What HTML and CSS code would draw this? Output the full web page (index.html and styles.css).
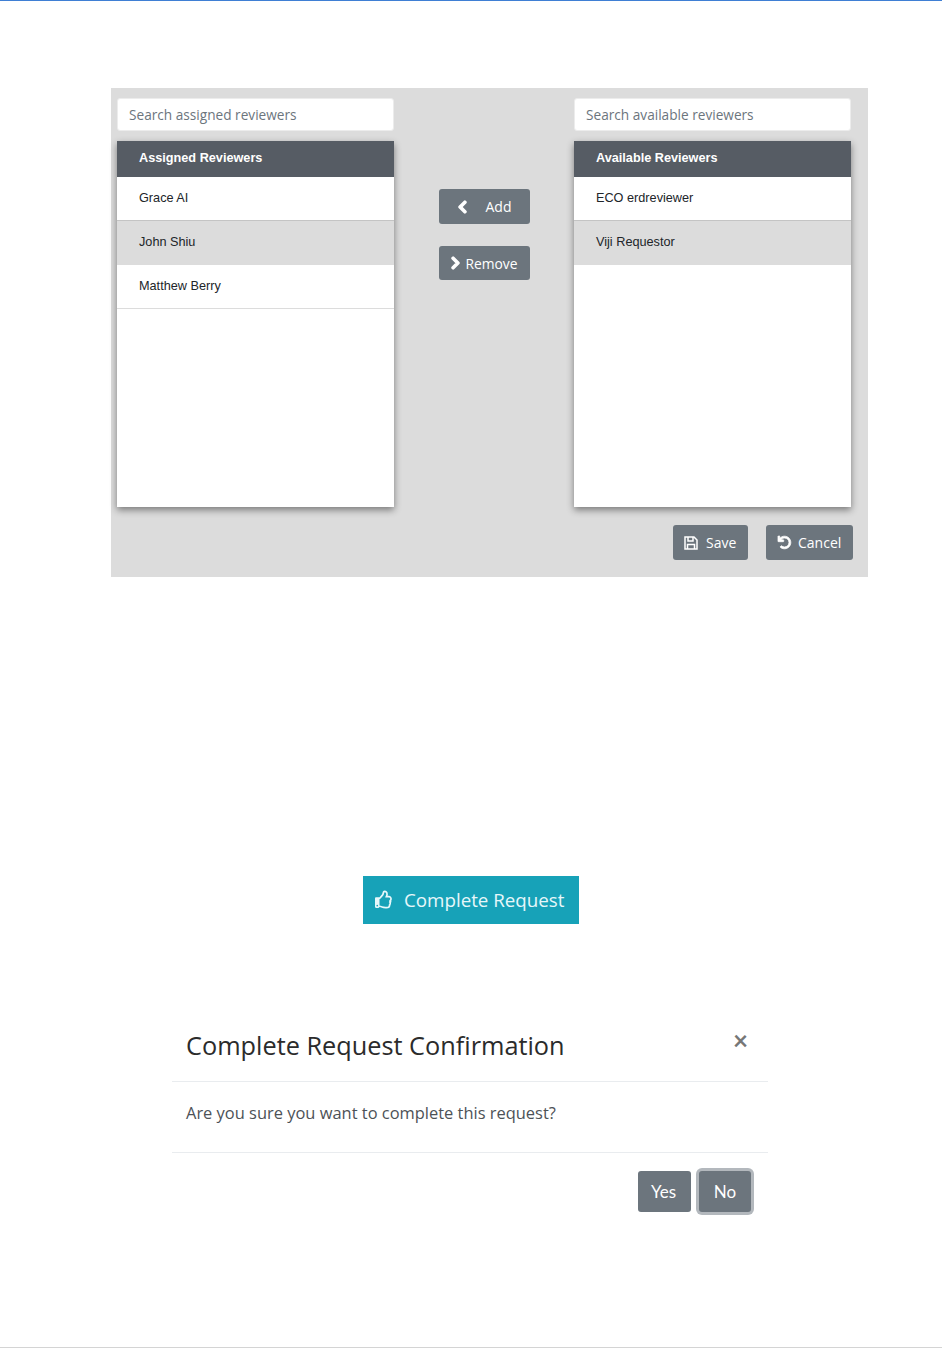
FILE: index.html
```html
<!DOCTYPE html>
<html lang="en">
<head>
    <meta charset="UTF-8">
    <meta name="viewport" content="width=device-width, initial-scale=1.0">
    <title>Reviewers</title>
    <link rel="stylesheet" href="styles.css">
</head>
<body>
    <section class="panel">
        <div class="columns">
            <div class="column">
                <input class="search" type="text" placeholder="Search assigned reviewers">
                <div class="list">
                    <div class="list-head">Assigned Reviewers</div>
                    <div class="list-row before-selected">Grace AI</div>
                    <div class="list-row selected">John Shiu</div>
                    <div class="list-row">Matthew Berry</div>
                </div>
            </div>

            <div class="transfer">
                <button class="btn btn-add">
                    <svg class="icon" viewBox="0 0 320 512"><path d="M34.52 239.03L228.87 44.69c9.37-9.37 24.57-9.37 33.94 0l22.67 22.67c9.36 9.36 9.37 24.52.04 33.9L131.49 256l154.02 154.75c9.34 9.38 9.32 24.54-.04 33.9l-22.67 22.67c-9.37 9.37-24.57 9.37-33.94 0L34.52 272.97c-9.37-9.37-9.37-24.57 0-33.94z"/></svg>
                    Add
                </button>
                <button class="btn btn-remove">
                    <svg class="icon" viewBox="0 0 320 512"><path d="M285.476 272.971L91.132 467.314c-9.373 9.373-24.569 9.373-33.941 0l-22.667-22.667c-9.357-9.357-9.375-24.522-.04-33.901L188.505 256 34.484 101.255c-9.335-9.379-9.317-24.544.04-33.901l22.667-22.667c9.373-9.373 24.569-9.373 33.941 0L285.475 239.03c9.373 9.372 9.373 24.568.001 33.941z"/></svg>
                    Remove
                </button>
            </div>

            <div class="column">
                <input class="search" type="text" placeholder="Search available reviewers">
                <div class="list">
                    <div class="list-head">Available Reviewers</div>
                    <div class="list-row before-selected">ECO erdreviewer</div>
                    <div class="list-row selected">Viji Requestor</div>
                </div>
            </div>
        </div>

        <div class="panel-actions">
            <button class="btn btn-save">
                <svg class="icon-save" viewBox="0 0 14 14"><path d="M1 1H10L13 4V13H1Z"/><path d="M4 1V5H9V1"/><path d="M3.5 13V8.5H10.5V13"/></svg>
                Save
            </button>
            <button class="btn btn-cancel">
                <svg class="icon" viewBox="0 0 512 512"><path d="M212.333 224.333H12c-6.627 0-12-5.373-12-12V12C0 5.373 5.373 0 12 0h48c6.627 0 12 5.373 12 12v78.112C117.773 39.279 184.26 7.47 258.175 8.007c136.906.994 246.448 111.623 246.157 248.532C504.041 393.258 393.12 504 256.333 504c-64.089 0-122.496-24.313-166.51-64.215-5.099-4.622-5.334-12.554-.467-17.42l33.967-33.967c4.474-4.474 11.662-4.717 16.401-.525C170.76 415.336 211.58 432 256.333 432c97.268 0 176-78.716 176-176 0-97.267-78.716-176-176-176-58.496 0-110.28 28.476-142.274 72.333h98.274c6.627 0 12 5.373 12 12v48c0 6.627-5.373 12-12 12z"/></svg>
                Cancel
            </button>
        </div>
    </section>

    <div class="complete-wrap">
        <button class="btn-complete">
            <svg class="thumb" viewBox="0 0 512 512"><path d="M466.27 286.69C475.04 271.84 480 256 480 236.85c0-44.015-37.218-85.58-85.82-85.58H357.7c4.92-12.81 8.85-28.13 8.85-46.54C366.55 31.936 328.86 0 271.28 0c-61.607 0-58.093 94.933-71.76 108.6-22.747 22.747-49.615 66.447-68.76 83.4H32c-17.673 0-32 14.327-32 32v240c0 17.673 14.327 32 32 32h64c14.893 0 27.408-10.174 30.978-23.95 44.509 1.001 75.06 39.94 177.802 39.94 7.22 0 15.22.01 22.22.01 77.117 0 111.986-39.423 112.94-95.33 13.319-18.425 20.299-43.122 17.34-66.99 9.854-18.452 13.664-40.343 8.99-62.99zm-61.75 53.83c12.56 21.13 1.26 49.41-13.94 57.57 7.7 48.78-17.608 65.9-53.12 65.9h-37.82c-71.639 0-118.029-37.82-171.64-37.82V240h10.92c28.36 0 67.98-70.89 94.54-97.46 28.36-28.36 18.91-75.63 37.82-94.54 47.27 0 47.27 32.98 47.27 56.73 0 39.17-28.36 56.72-28.36 94.54h103.99c21.11 0 37.73 18.91 37.82 37.82.09 18.9-12.82 37.81-28.32 37.82 8.8 21.1.8 42.6-10.14 56.4zM88 432c0 13.255-10.745 24-24 24s-24-10.745-24-24 10.745-24 24-24 24 10.745 24 24z"/></svg>
            Complete Request
        </button>
    </div>

    <section class="modal">
        <div class="modal-head">
            <h2 class="modal-title">Complete Request Confirmation</h2>
            <span class="modal-close">&times;</span>
        </div>
        <div class="modal-body">Are you sure you want to complete this request?</div>
        <div class="modal-foot">
            <button class="btn-modal">Yes</button>
            <button class="btn-modal focused">No</button>
        </div>
    </section>

    <div class="page-rule"></div>
</body>
</html>
```

FILE: styles.css
```css
* {
    box-sizing: border-box;
}

body {
    margin: 0;
    height: 1348px;
    display: flex;
    flex-direction: column;
    background: #fff;
    border-top: 1px solid #3f7fd4;
    font-family: "Open Sans", sans-serif;
    overflow: hidden;
}

button {
    font-family: inherit;
    border: none;
    cursor: pointer;
}

.panel {
    width: 757px;
    height: 489px;
    margin: 87px 0 0 111px;
    padding: 10px 17px 0 6px;
    background: #dcdcdc;
}

.columns {
    display: flex;
    justify-content: space-between;
}

.column {
    width: 277px;
}

.search {
    display: block;
    width: 277px;
    height: 33px;
    margin-bottom: 10px;
    padding: 0 11px;
    border: 1px solid #ececec;
    border-radius: 3px;
    background: #fff;
    font-family: "Open Sans", sans-serif;
    font-size: 13.65px;
}

.search::placeholder {
    color: #6c757d;
    opacity: 1;
}

.list {
    height: 366px;
    background: #fff;
    box-shadow: 0 3px 7px rgba(0, 0, 0, 0.45);
}

.list-head {
    height: 36px;
    padding-left: 22px;
    background: #565c64;
    color: #fff;
    font-family: "Liberation Sans", sans-serif;
    font-size: 12.7px;
    font-weight: 700;
    line-height: 35px;
}

.list-row {
    height: 44px;
    padding-left: 22px;
    border-bottom: 1px solid #dcdcdc;
    color: #212529;
    font-family: "Liberation Sans", sans-serif;
    font-size: 12.7px;
    line-height: 43px;
}

.list-row.before-selected {
    border-bottom-color: #c4c4c4;
}

.list-row.selected {
    background: #dcdcdc;
}

.transfer {
    width: 91px;
    padding-top: 91px;
    display: flex;
    flex-direction: column;
    gap: 22px;
}

.btn {
    display: flex;
    align-items: center;
    background: #6c757d;
    color: #fff;
    border-radius: 3px;
    font-size: 14px;
}

.btn .icon {
    fill: #fff;
    stroke: #fff;
    overflow: visible;
    flex: none;
}

.btn-add {
    width: 91px;
    height: 35px;
    padding: 0 0 0 18px;
    gap: 18px;
}

.btn-add .icon {
    width: 11px;
    height: 14px;
    stroke-width: 50px;
}

.btn-remove {
    width: 91px;
    height: 34px;
    padding: 0 0 0 11px;
    gap: 5px;
    font-size: 13.8px;
}

.btn-remove .icon {
    width: 11px;
    height: 14px;
    stroke-width: 50px;
}

.btn-save {
    width: 75px;
    height: 35px;
    padding: 0 0 0 11px;
    gap: 8px;
}

.icon-save {
    width: 14px;
    height: 14px;
    fill: none;
    stroke: #fff;
    stroke-width: 1.5px;
    flex: none;
}

.btn-cancel {
    width: 87px;
    height: 35px;
    padding: 0 0 0 12px;
    gap: 7px;
}

.btn-cancel .icon {
    width: 13px;
    height: 13px;
    stroke-width: 30px;
}

.panel-actions {
    display: flex;
    justify-content: flex-end;
    gap: 18px;
    margin: 18px -2px 0 0;
}

.complete-wrap {
    display: flex;
    justify-content: center;
    margin-top: 299px;
}

.btn-complete {
    display: flex;
    align-items: center;
    gap: 11px;
    width: 216px;
    height: 48px;
    padding: 0 0 2px 12px;
    background: #17a2b8;
    color: #e6f7fa;
    font-size: 18.75px;
}

.thumb {
    width: 18px;
    height: 19px;
    fill: #e6f7fa;
    flex: none;
}

.modal {
    width: 596px;
    margin: 100px 0 0 172px;
}

.modal-head {
    display: flex;
    justify-content: space-between;
    height: 58px;
    padding: 0 20px 0 14px;
    border-bottom: 1px solid #e9ecef;
}

.modal-title {
    margin: 0;
    color: #2b2b2b;
    font-size: 25.3px;
    font-weight: 400;
    line-height: 43px;
}

.modal-close {
    color: #777;
    font-family: "Lato", sans-serif;
    font-size: 26px;
    font-weight: 700;
    line-height: 32px;
}

.modal-body {
    height: 71px;
    padding: 20px 14px 0;
    border-bottom: 1px solid #e9ecef;
    color: #4d5257;
    font-size: 16.45px;
    line-height: 22px;
}

.modal-foot {
    display: flex;
    justify-content: flex-end;
    gap: 8px;
    padding: 18px 17px 0 0;
}

.btn-modal {
    width: 53px;
    height: 41px;
    padding: 0 2px 0 0;
    background: #6c757d;
    color: #fff;
    border-radius: 3px;
    font-family: "Lato", sans-serif;
    font-size: 17px;
}

.btn-modal.focused {
    width: 52px;
    padding: 0;
    box-shadow: 0 0 0 3px #b3b8bd;
}

.page-rule {
    margin-top: auto;
    height: 1px;
    background: #d4d4d4;
}
```
